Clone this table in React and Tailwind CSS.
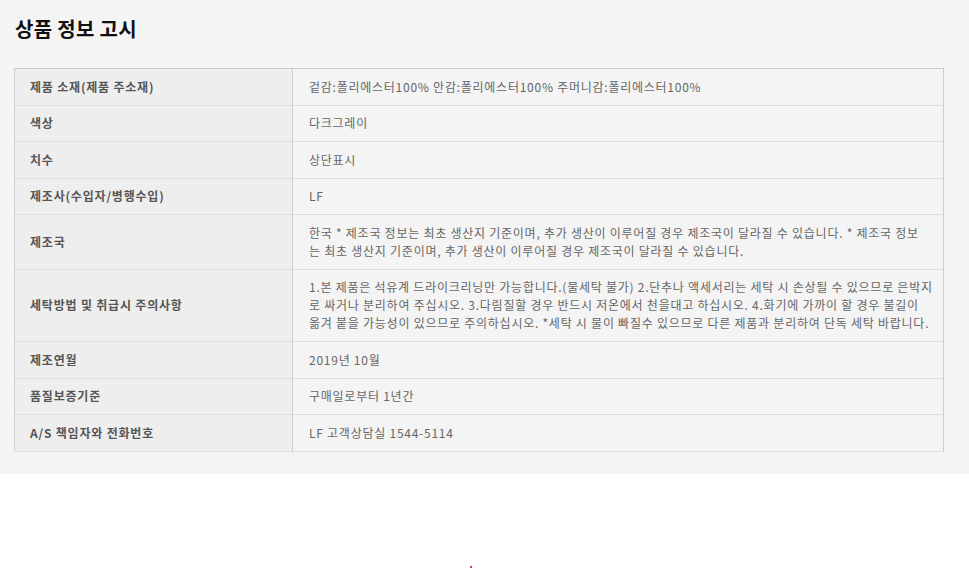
import React from "react";

const rows = [
  { label: "제품 소재(제품 주소재)", value: ["겉감:폴리에스터100% 안감:폴리에스터100% 주머니감:폴리에스터100%"] },
  { label: "색상", value: ["다크그레이"] },
  { label: "치수", value: ["상단표시"] },
  { label: "제조사(수입자/병행수입)", value: ["LF"] },
  {
    label: "제조국",
    value: [
      "한국 * 제조국 정보는 최초 생산지 기준이며, 추가 생산이 이루어질 경우 제조국이 달라질 수 있습니다. * 제조국 정보",
      "는 최초 생산지 기준이며, 추가 생산이 이루어질 경우 제조국이 달라질 수 있습니다.",
    ],
  },
  {
    label: "세탁방법 및 취급시 주의사항",
    value: [
      "1.본 제품은 석유계 드라이크리닝만 가능합니다.(물세탁 불가) 2.단추나 액세서리는 세탁 시 손상될 수 있으므로 은박지",
      "로 싸거나 분리하여 주십시오. 3.다림질할 경우 반드시 저온에서 천을대고 하십시오. 4.화기에 가까이 할 경우 불길이",
      "옮겨 붙을 가능성이 있으므로 주의하십시오. *세탁 시 물이 빠질수 있으므로 다른 제품과 분리하여 단독 세탁 바랍니다.",
    ],
  },
  { label: "제조연월", value: ["2019년 10월"] },
  { label: "품질보증기준", value: ["구매일로부터 1년간"] },
  { label: "A/S 책임자와 전화번호", value: ["LF 고객상담실 1544-5114"] },
];

export default function App() {
  return (
    <div className="min-h-[568px] bg-white font-['Noto_Sans_CJK_KR','Noto_Sans',sans-serif]">
      <div className="bg-[#f4f4f4] pt-[15px] pb-[22px] pl-[14px]">
        <h2 className="pl-[1px] text-[20px] font-bold leading-[28px] text-[#111] tracking-[0.3px]">상품 정보 고시</h2>
        <table className="mt-[25px] w-[930px] border-collapse border border-[#cccccc] text-[12px]">
          <tbody>
            {rows.map((r) => (
              <tr key={r.label} className="border-b border-[#dddddd]">
                <th className="w-[278px] border-r border-[#cccccc] bg-[#eeeeee] py-[8.75px] pl-[15px] text-left align-middle font-bold leading-[18px] text-[#555] tracking-[0.8px]">
                  {r.label}
                </th>
                <td className="py-[8.75px] pl-[16px] leading-[18px] text-[#666] tracking-[0.75px]">
                  {r.value.map((line, i) => (
                    <div key={i} className="whitespace-nowrap">{line}</div>
                  ))}
                </td>
              </tr>
            ))}
          </tbody>
        </table>
      </div>
      <div className="relative h-[94px]">
        <div className="absolute left-[470px] bottom-0 h-[2px] w-[2px] bg-[#e33]" />
      </div>
    </div>
  );
}
